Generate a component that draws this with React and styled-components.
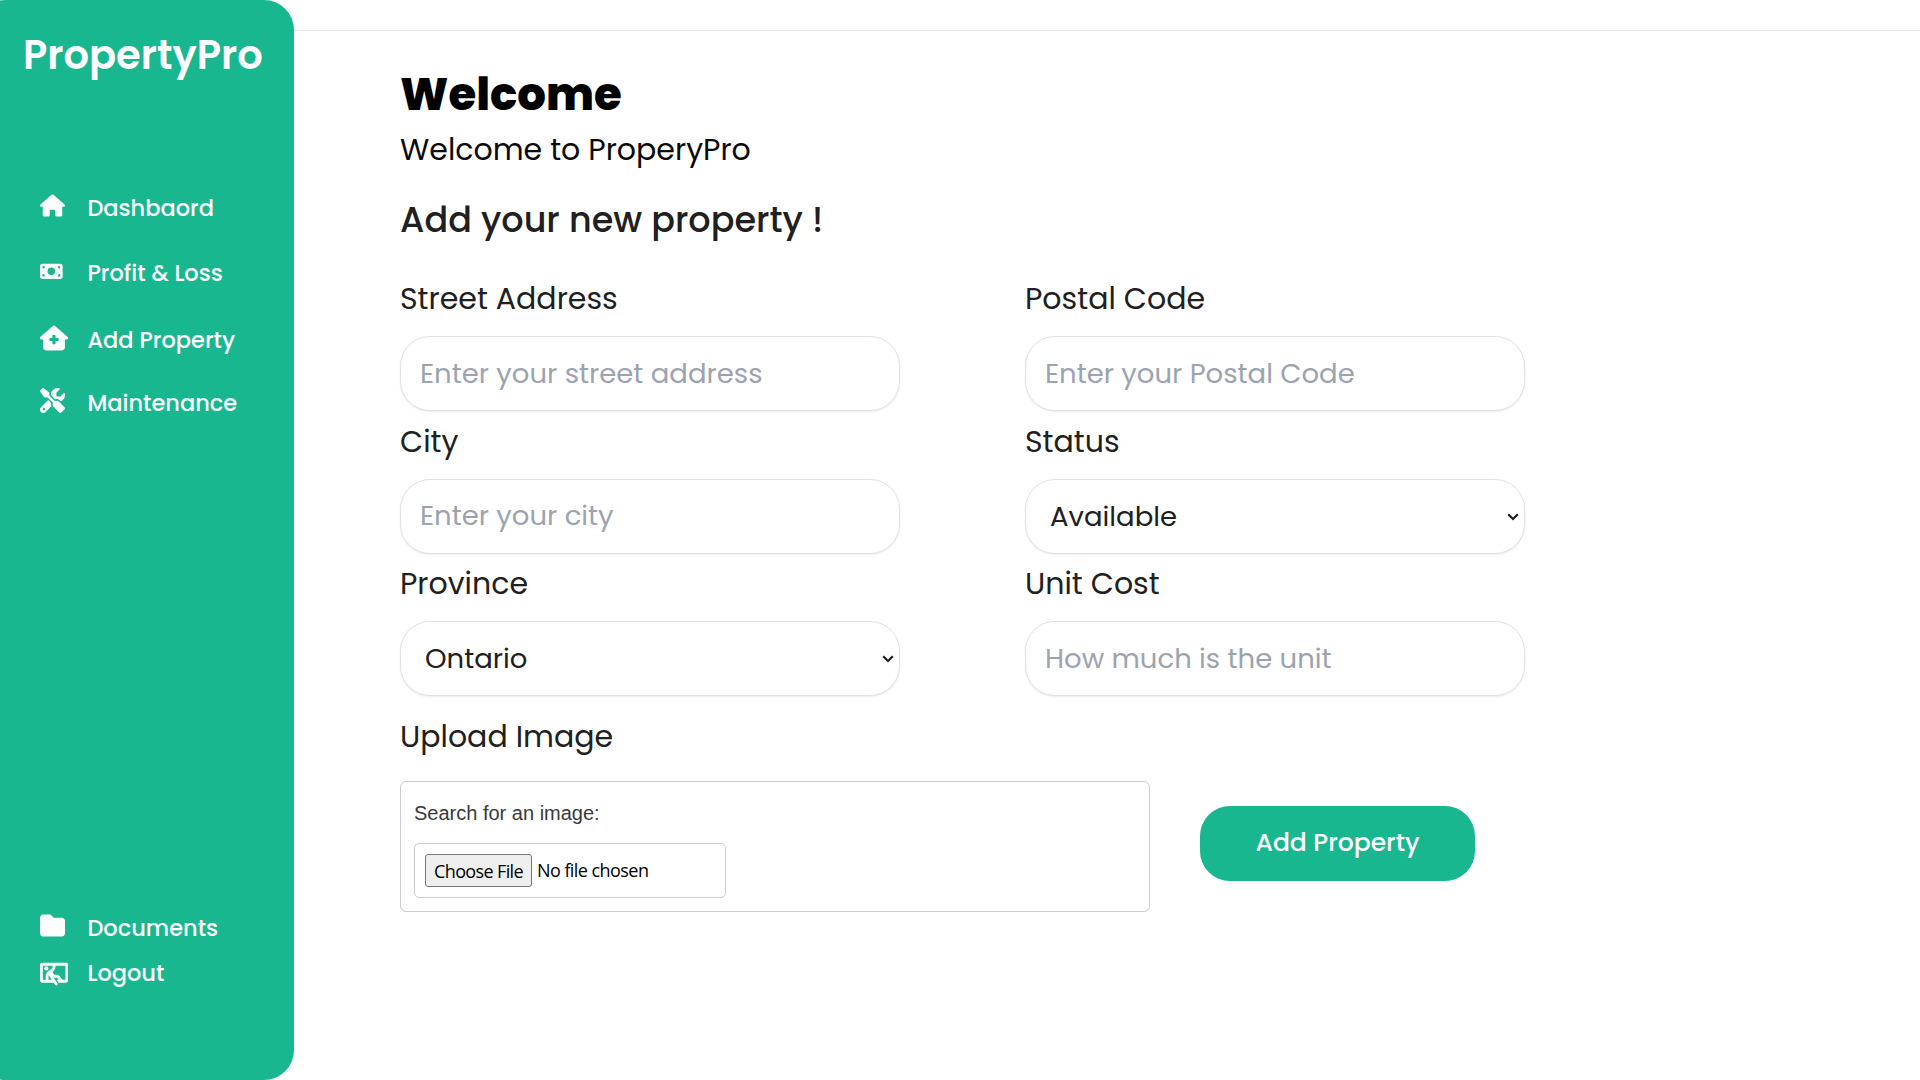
import React from "react";
import styled, { createGlobalStyle, css } from "styled-components";
import {
  FaHouse,
  FaMoneyBill,
  FaHouseMedical,
  FaScrewdriverWrench,
  FaFolder,
  FaPersonThroughWindow,
} from "react-icons/fa6";

const green = "#19b78f";
const ink = "#202020";
const line = "#e2e2e2";

const GlobalStyle = createGlobalStyle`
  *, *::before, *::after { box-sizing: border-box; }
  body {
    margin: 0;
    background: #fff;
    font-family: Poppins, Inter, sans-serif;
    overflow: hidden;
  }
  h1, h2, p { margin: 0; }
`;

const Page = styled.div`
  display: flex;
  height: 1080px;
  overflow: hidden;
`;

const Sidebar = styled.aside`
  display: flex;
  flex-direction: column;
  flex: none;
  width: 318px;
  margin-left: -24px;
  padding: 30px 0 93px 64px;
  border-radius: 30px;
  background: ${green};
  color: #fff;
`;

const Brand = styled.div`
  margin: 0 0 114px -17px;
  font-size: 40px;
  font-weight: 600;
  line-height: 50px;
  white-space: nowrap;
`;

const Nav = styled.nav`
  display: flex;
  flex-direction: column;
  gap: ${(p) => p.$gap}px;
  margin-top: ${(p) => (p.$bottom ? "auto" : 0)};
`;

const NavItem = styled.a`
  display: flex;
  align-items: center;
  height: 28px;
  margin-top: ${(p) => p.$shift || 0}px;
  color: #fdfdfd;
  font-size: 22.5px;
  font-weight: 500;
  line-height: 28px;
  white-space: nowrap;
`;

const IconSlot = styled.span`
  display: flex;
  flex: none;
  width: 47.4px;
  margin-bottom: ${(p) => p.$lift}px;
`;

const Content = styled.div`
  flex: 1;
  min-width: 0;
`;

const TopBar = styled.header`
  height: 31px;
  border-bottom: 1px solid #e5e5e5;
`;

const Main = styled.main`
  padding: 33px 0 0 106px;
  color: ${ink};
`;

const Title = styled.h1`
  color: #000;
  font-size: 45px;
  font-weight: 800;
  line-height: 62px;
`;

const Subtitle = styled.p`
  margin-top: 1px;
  color: #0a0a0a;
  font-size: 30px;
  font-weight: 400;
  line-height: 45px;
`;

const Heading = styled.h2`
  margin: 23px 0 31px;
  font-size: 35px;
  font-weight: 500;
  line-height: 50px;
`;

const FieldGrid = styled.div`
  display: grid;
  grid-template-columns: 500px 500px;
  column-gap: 125px;
  row-gap: 7.67px;
`;

const Field = styled.div`
  display: flex;
  flex-direction: column;
  gap: 15px;
`;

const Label = styled.label`
  font-size: 30px;
  font-weight: 400;
  line-height: 45px;
`;

const control = css`
  width: 100%;
  height: 75px;
  border: 1px solid ${line};
  border-radius: 30px;
  background-color: #fff;
  box-shadow: 0 1px 2px rgba(0, 0, 0, 0.08);
  color: ${ink};
  font-family: inherit;
  font-size: 27.5px;
  font-weight: 400;
  outline: none;
`;

const TextInput = styled.input`
  ${control}
  padding: 0 19px;
  &::placeholder {
    color: #9ca3af;
    opacity: 1;
  }
`;

const SelectWrap = styled.div`
  position: relative;
`;

const Select = styled.select`
  ${control}
  display: block;
  appearance: none;
  padding: 0 40px 0 24px;
`;

const Chevron = styled.svg`
  position: absolute;
  top: 34px;
  right: 6px;
  width: 12px;
  height: 8px;
  pointer-events: none;
`;

const UploadLabel = styled(Label)`
  display: block;
  margin: 17.33px 0 22.33px;
`;

const UploadRow = styled.div`
  display: flex;
  align-items: flex-start;
  gap: 50px;
`;

const UploadBox = styled.div`
  width: 750px;
  height: 131px;
  padding: 19px 13px 13px;
  border: 1px solid #ccc;
  border-radius: 6px;
`;

const UploadHint = styled.p`
  margin-bottom: 18px;
  color: #3a3a3a;
  font-family: "Liberation Sans", Arial, sans-serif;
  font-size: 20px;
  line-height: 24px;
`;

const FilePicker = styled.div`
  display: flex;
  align-items: center;
  gap: 5px;
  width: 312px;
  height: 55px;
  padding-left: 10px;
  border: 1px solid #ccc;
  border-radius: 5px;
  color: #000;
  font-family: "Open Sans", sans-serif;
  font-size: 18px;
  letter-spacing: -0.56px;
`;

const FileButton = styled.button`
  width: 107px;
  height: 33px;
  padding: 1px 0 0;
  border: 1px solid #767676;
  border-radius: 3px;
  background: #efefef;
  color: #000;
  font: inherit;
  letter-spacing: -0.63px;
  line-height: 30px;
`;

const SubmitButton = styled.button`
  width: 275px;
  height: 75px;
  margin-top: 25px;
  padding: 0;
  border: 0;
  border-radius: 30px;
  background: ${green};
  color: #fff;
  font-family: inherit;
  font-size: 25px;
  font-weight: 500;
`;

const mainNav = [
  { label: "Dashbaord", Icon: FaHouse, size: 25 },
  { label: "Profit & Loss", Icon: FaMoneyBill, size: 22.7, lift: 4 },
  { label: "Add Property", Icon: FaHouseMedical, size: 28, shift: 2 },
  { label: "Maintenance", Icon: FaScrewdriverWrench, size: 25, shift: -2 },
];

const footerNav = [
  { label: "Documents", Icon: FaFolder, size: 25 },
  { label: "Logout", Icon: FaPersonThroughWindow, size: 28.3, lift: -2 },
];

const fields = [
  { label: "Street Address", placeholder: "Enter your street address" },
  { label: "Postal Code", placeholder: "Enter your Postal Code" },
  { label: "City", placeholder: "Enter your city" },
  { label: "Status", value: "Available" },
  { label: "Province", value: "Ontario" },
  { label: "Unit Cost", placeholder: "How much is the unit" },
];

function NavGroup({ items, gap, bottom }) {
  return (
    <Nav $gap={gap} $bottom={bottom}>
      {items.map(({ label, Icon, size, shift, lift = 5 }) => (
        <NavItem key={label} $shift={shift}>
          <IconSlot $lift={lift}>
            <Icon size={size} />
          </IconSlot>
          {label}
        </NavItem>
      ))}
    </Nav>
  );
}

function SelectField({ value }) {
  return (
    <SelectWrap>
      <Select defaultValue={value}>
        <option>{value}</option>
      </Select>
      <Chevron viewBox="0 0 12 8" fill="none" stroke={ink} strokeWidth="2.2">
        <path d="M1.2 1.2 6 6l4.8-4.8" />
      </Chevron>
    </SelectWrap>
  );
}

export default function App() {
  return (
    <>
      <GlobalStyle />
      <Page>
        <Sidebar>
          <Brand>PropertyPro</Brand>
          <NavGroup items={mainNav} gap={37} />
          <NavGroup items={footerNav} gap={17} bottom />
        </Sidebar>
        <Content>
          <TopBar />
          <Main>
            <Title>Welcome</Title>
            <Subtitle>Welcome to ProperyPro</Subtitle>
            <Heading>Add your new property !</Heading>
            <FieldGrid>
              {fields.map(({ label, placeholder, value }) => (
                <Field key={label}>
                  <Label>{label}</Label>
                  {value ? <SelectField value={value} /> : <TextInput placeholder={placeholder} />}
                </Field>
              ))}
            </FieldGrid>
            <UploadLabel>Upload Image</UploadLabel>
            <UploadRow>
              <UploadBox>
                <UploadHint>Search for an image:</UploadHint>
                <FilePicker>
                  <FileButton type="button">Choose File</FileButton>
                  <span>No file chosen</span>
                </FilePicker>
              </UploadBox>
              <SubmitButton type="button">Add Property</SubmitButton>
            </UploadRow>
          </Main>
        </Content>
      </Page>
    </>
  );
}
